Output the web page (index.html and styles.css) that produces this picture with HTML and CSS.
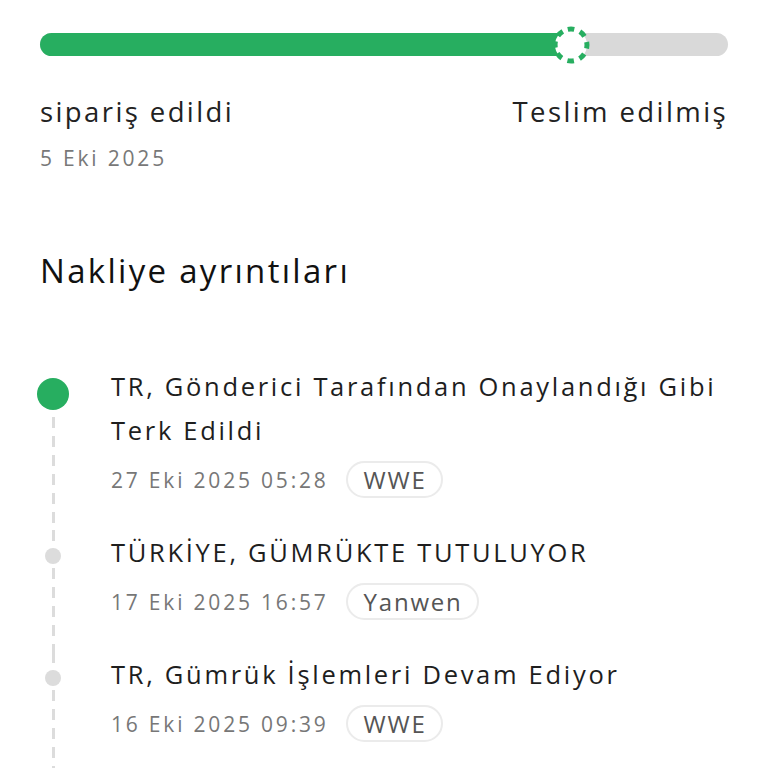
FILE: index.html
```html
<!DOCTYPE html>
<html lang="tr">
<head>
<meta charset="utf-8">
<link rel="stylesheet" href="styles.css">
</head>
<body>
<div class="page">
  <div class="progress">
    <div class="track">
      <div class="fill" style="width:77.2%"></div>
      <svg class="marker" style="left:calc(77.2% - 20px)" width="40" height="40" viewBox="0 0 40 40">
        <circle cx="20" cy="20" r="16" fill="#fff"/>
        <circle cx="20" cy="20" r="16" fill="none" stroke="#27ae60" stroke-width="5" stroke-dasharray="6.5 6.07" transform="rotate(-101.6 20 20)"/>
      </svg>
    </div>
  </div>
  <div class="status-row">
    <div class="status">
      <div class="status-label">sipariş edildi</div>
      <div class="status-date">5 Eki 2025</div>
    </div>
    <div class="status right">
      <div class="status-label">Teslim edilmiş</div>
    </div>
  </div>

  <h2 class="heading">Nakliye ayrıntıları</h2>

  <div class="timeline">
    <div class="item first">
      <div class="rail"><span class="dot big"></span></div>
      <div class="content">
        <div class="title">TR, Gönderici Tarafından Onaylandığı Gibi Terk Edildi</div>
        <div class="meta"><span class="date">27 Eki 2025 05:28</span><span class="badge">WWE</span></div>
      </div>
    </div>
    <div class="item">
      <div class="rail"><span class="dot"></span></div>
      <div class="content">
        <div class="title">TÜRKİYE, GÜMRÜKTE TUTULUYOR</div>
        <div class="meta"><span class="date">17 Eki 2025 16:57</span><span class="badge">Yanwen</span></div>
      </div>
    </div>
    <div class="item">
      <div class="rail"><span class="dot"></span></div>
      <div class="content">
        <div class="title">TR, Gümrük İşlemleri Devam Ediyor</div>
        <div class="meta"><span class="date">16 Eki 2025 09:39</span><span class="badge">WWE</span></div>
      </div>
    </div>
  </div>
</div>
</body>
</html>
```

FILE: styles.css
```css
* { box-sizing: border-box; }
html, body { margin: 0; padding: 0; background: #fff; }
body {
  font-family: "Open Sans", "Noto Sans", sans-serif;
  color: #1e1e1e;
  overflow: hidden;
}
.page {
  width: 768px;
  height: 768px;
  padding: 33px 40px 0 40px;
}
.progress { height: 23px; }
.track {
  position: relative;
  height: 23px;
  border-radius: 12px;
  background: #d9d9d9;
}
.fill {
  height: 100%;
  background: #27ae60;
  border-radius: 12px 0 0 12px;
}
.marker {
  position: absolute;
  top: -8.5px;
}
.status-row {
  display: flex;
  justify-content: space-between;
  margin-top: 38px;
}
.status-label {
  font-size: 27.5px;
  line-height: 36px;
  letter-spacing: 2.4px;
  color: #222;
}
.status-date {
  margin-top: 14px;
  font-size: 21px;
  line-height: 28px;
  letter-spacing: 2.8px;
  color: #787878;
}
.heading {
  margin: 77px 0 0 0;
  font-weight: 400;
  font-size: 33px;
  line-height: 44px;
  letter-spacing: 2.3px;
  color: #111;
}
.timeline {
  margin-top: 71px;
}
.item {
  display: flex;
  padding-bottom: 32px;
}
.rail {
  width: 71px;
  flex: 0 0 71px;
  position: relative;
}
.rail::before {
  content: "";
  position: absolute;
  left: 11.5px;
  top: 0;
  bottom: -32px;
  width: 3px;
  background: repeating-linear-gradient(to bottom, #dcdcdc 0 11px, transparent 11px 19px);
}
.item.first .rail::before { top: 53px; }
.dot {
  position: absolute;
  left: 5px;
  top: 18px;
  width: 16px;
  height: 16px;
  border-radius: 50%;
  background: #dcdcdc;
}
.dot.big {
  left: -3px;
  top: 14px;
  width: 32px;
  height: 32px;
  background: #27ae60;
}
.content { flex: 1; }
.title {
  font-size: 25.5px;
  line-height: 44px;
  letter-spacing: 2.7px;
  color: #1e1e1e;
}
.meta {
  display: flex;
  align-items: center;
  margin-top: 9px;
}
.date {
  font-size: 21px;
  letter-spacing: 2.8px;
  color: #777;
}
.badge {
  margin-left: 17px;
  height: 37px;
  padding: 0 14px 0 16px;
  display: inline-flex;
  align-items: center;
  border: 2px solid #ebebeb;
  border-radius: 19px;
  font-size: 24px;
  letter-spacing: 1.8px;
  color: #555;
}
```
